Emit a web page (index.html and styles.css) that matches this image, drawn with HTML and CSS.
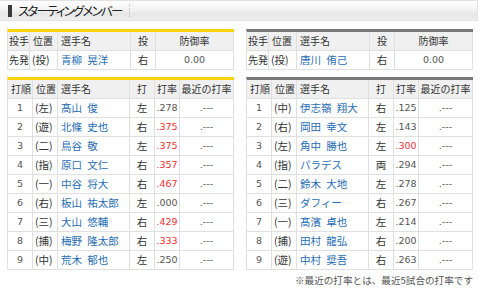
FILE: index.html
```html
<!DOCTYPE html>
<html lang="ja">
<head>
<meta charset="utf-8">
<link rel="stylesheet" href="styles.css">
</head>
<body>
<div class="title-bar"><span class="mark"></span><span class="title">スターティングメンバー</span><span class="sep"></span></div>
<div class="cols">
  <div class="team home">
    <table class="grid">
      <colgroup><col style="width:22px"><col style="width:28px"><col style="width:73px"><col style="width:25px"><col style="width:78px"></colgroup>
      <tr><th class="first">投手</th><th>位置</th><th>選手名</th><th class="c">投</th><th class="c">防御率</th></tr>
      <tr><td class="first">先発</td><td class="pos">(投)</td><td class="nm">青柳&ensp;晃洋</td><td class="c">右</td><td class="c num">0.00</td></tr>
    </table>
    <table class="grid bat">
      <colgroup><col style="width:25px"><col style="width:25px"><col style="width:72px"><col style="width:25px"><col style="width:25px"><col style="width:54px"></colgroup>
      <tr><th>打順</th><th>位置</th><th>選手名</th><th class="c">打</th><th class="c">打率</th><th class="c">最近の打率</th></tr>
      <tr><td class="c num">1</td><td class="pos">(左)</td><td class="nm">髙山&ensp;俊</td><td class="c">左</td><td class="c num">.278</td><td class="c num">.---</td></tr>
      <tr><td class="c num">2</td><td class="pos">(遊)</td><td class="nm">北條&ensp;史也</td><td class="c">右</td><td class="c num red">.375</td><td class="c num">.---</td></tr>
      <tr><td class="c num">3</td><td class="pos">(二)</td><td class="nm">鳥谷&ensp;敬</td><td class="c">左</td><td class="c num red">.375</td><td class="c num">.---</td></tr>
      <tr><td class="c num">4</td><td class="pos">(指)</td><td class="nm">原口&ensp;文仁</td><td class="c">右</td><td class="c num red">.357</td><td class="c num">.---</td></tr>
      <tr><td class="c num">5</td><td class="pos">(一)</td><td class="nm">中谷&ensp;将大</td><td class="c">右</td><td class="c num red">.467</td><td class="c num">.---</td></tr>
      <tr><td class="c num">6</td><td class="pos">(右)</td><td class="nm">板山&ensp;祐太郎</td><td class="c">左</td><td class="c num">.000</td><td class="c num">.---</td></tr>
      <tr><td class="c num">7</td><td class="pos">(三)</td><td class="nm">大山&ensp;悠輔</td><td class="c">右</td><td class="c num red">.429</td><td class="c num">.---</td></tr>
      <tr><td class="c num">8</td><td class="pos">(捕)</td><td class="nm">梅野&ensp;隆太郎</td><td class="c">右</td><td class="c num red">.333</td><td class="c num">.---</td></tr>
      <tr><td class="c num">9</td><td class="pos">(中)</td><td class="nm">荒木&ensp;郁也</td><td class="c">左</td><td class="c num">.250</td><td class="c num">.---</td></tr>
    </table>
  </div>
  <div class="team away">
    <table class="grid">
      <colgroup><col style="width:22px"><col style="width:28px"><col style="width:73px"><col style="width:25px"><col style="width:78px"></colgroup>
      <tr><th class="first">投手</th><th>位置</th><th>選手名</th><th class="c">投</th><th class="c">防御率</th></tr>
      <tr><td class="first">先発</td><td class="pos">(投)</td><td class="nm">唐川&ensp;侑己</td><td class="c">右</td><td class="c num">0.00</td></tr>
    </table>
    <table class="grid bat">
      <colgroup><col style="width:25px"><col style="width:25px"><col style="width:72px"><col style="width:25px"><col style="width:25px"><col style="width:54px"></colgroup>
      <tr><th>打順</th><th>位置</th><th>選手名</th><th class="c">打</th><th class="c">打率</th><th class="c">最近の打率</th></tr>
      <tr><td class="c num">1</td><td class="pos">(中)</td><td class="nm">伊志嶺&ensp;翔大</td><td class="c">右</td><td class="c num">.125</td><td class="c num">.---</td></tr>
      <tr><td class="c num">2</td><td class="pos">(右)</td><td class="nm">岡田&ensp;幸文</td><td class="c">左</td><td class="c num">.143</td><td class="c num">.---</td></tr>
      <tr><td class="c num">3</td><td class="pos">(左)</td><td class="nm">角中&ensp;勝也</td><td class="c">左</td><td class="c num red">.300</td><td class="c num">.---</td></tr>
      <tr><td class="c num">4</td><td class="pos">(指)</td><td class="nm">パラデス</td><td class="c">両</td><td class="c num">.294</td><td class="c num">.---</td></tr>
      <tr><td class="c num">5</td><td class="pos">(二)</td><td class="nm">鈴木&ensp;大地</td><td class="c">左</td><td class="c num">.278</td><td class="c num">.---</td></tr>
      <tr><td class="c num">6</td><td class="pos">(三)</td><td class="nm">ダフィー</td><td class="c">右</td><td class="c num">.267</td><td class="c num">.---</td></tr>
      <tr><td class="c num">7</td><td class="pos">(一)</td><td class="nm">髙濱&ensp;卓也</td><td class="c">左</td><td class="c num">.214</td><td class="c num">.---</td></tr>
      <tr><td class="c num">8</td><td class="pos">(捕)</td><td class="nm">田村&ensp;龍弘</td><td class="c">右</td><td class="c num">.200</td><td class="c num">.---</td></tr>
      <tr><td class="c num">9</td><td class="pos">(遊)</td><td class="nm">中村&ensp;奨吾</td><td class="c">右</td><td class="c num">.263</td><td class="c num">.---</td></tr>
    </table>
    <p class="note">※最近の打率とは、最近5試合の打率です</p>
  </div>
</div>
</body>
</html>
```

FILE: styles.css
```css
html, body {
  margin: 0;
  padding: 0;
  background: #fff;
}
body {
  font-family: "Noto Sans CJK JP", "Noto Sans", sans-serif;
  color: #333;
  width: 480px;
  height: 289px;
  overflow: hidden;
}
.title-bar {
  width: 477px;
  height: 19px;
  border: 1px solid #e2e2e2;
  border-left: none;
  background: linear-gradient(#ffffff 0%, #f6f6f6 35%, #e6e6e6 70%, #efefef 100%);
  display: flex;
  align-items: center;
  box-sizing: content-box;
}
.mark {
  width: 4px;
  height: 12px;
  background: #3a3a3a;
  margin-left: 8px;
  margin-right: 6px;
}
.title {
  font-size: 12.5px;
  font-feature-settings: "palt";
  letter-spacing: -1.8px;
  color: #222;
  line-height: 19px;
}
.sep {
  height: 13px;
  border-left: 1px dotted #bbb;
  margin-left: 7px;
}
.cols {
  display: flex;
  gap: 12px;
  padding-left: 7px;
  margin-top: 8px;
}
.team {
  width: 227px;
  display: flex;
  flex-direction: column;
  gap: 7px;
}
.grid {
  border-collapse: separate;
  border-spacing: 0;
  table-layout: fixed;
  width: 227px;
  border-left: 1px solid #e0e0e0;
  font-size: 10.5px;
}
.home .grid { border-top: 3px solid #f9d400; }
.away .grid { border-top: 3px solid #777; }
.grid th, .grid td {
  height: 18px;
  padding: 0 0 0 3px;
  border-right: 1px solid #e0e0e0;
  border-bottom: 1px solid #e0e0e0;
  font-weight: normal;
  text-align: left;
  white-space: nowrap;
  overflow: hidden;
  line-height: 18px;
  color: #333;
}
.grid th {
  background: #f0f0f0;
  font-size: 10px;
}
.grid .first {
  padding-left: 1px;
  font-size: 10px;
}
.grid .c {
  text-align: center;
  padding: 0;
}
.grid .pos {
  padding-left: 2px;
}
.grid .nm {
  color: #1f6db5;
}
.grid .num {
  font-family: "DejaVu Sans", sans-serif;
  font-size: 9.5px;
  color: #555;
}
.grid .red {
  color: #f53035;
}
.note {
  margin: -3px 0 0;
  text-align: right;
  font-size: 9.6px;
  color: #555;
  line-height: 12px;
}
```
